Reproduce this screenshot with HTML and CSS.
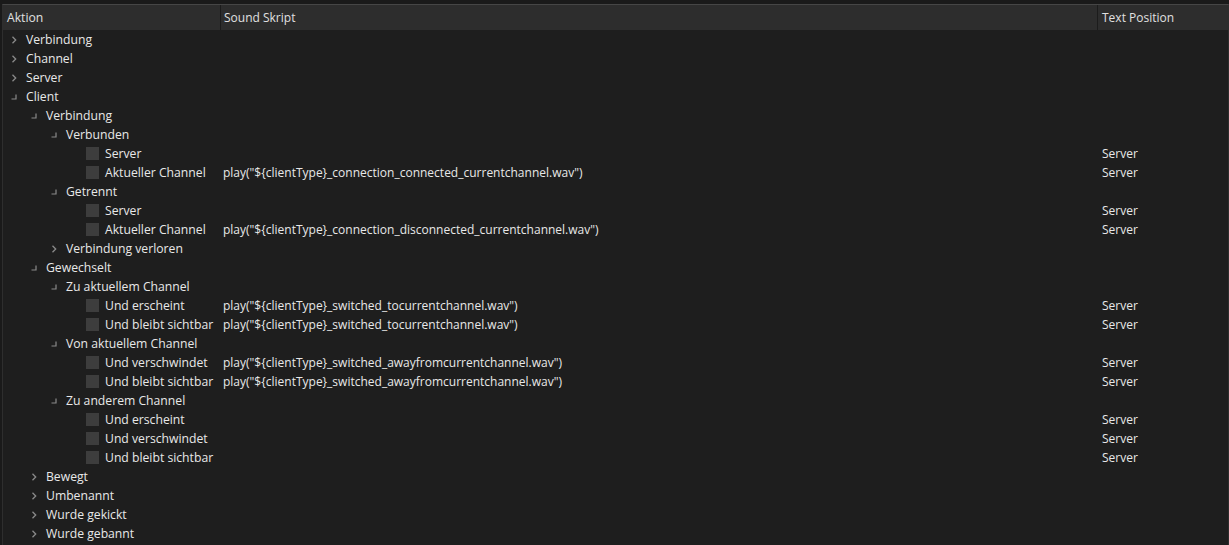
FILE: index.html
```html
<!DOCTYPE html>
<html>
<head>
<meta charset="utf-8">
<link rel="stylesheet" href="styles.css">
</head>
<body>
<div class="frame">
  <div class="tree">
    <div class="row head">
      <div class="cell c1">Aktion</div>
      <div class="cell c2">Sound Skript</div>
      <div class="cell c3">Text Position</div>
    </div>
    <div class="body" id="body"></div>
  </div>
</div>
<svg width="0" height="0" style="position:absolute">
  <defs>
    <symbol id="col" viewBox="0 0 8 8"><path d="M2.5 0.8 L5.7 4 L2.5 7.2" fill="none" stroke="#8a8a8a" stroke-width="1.3"/></symbol>
    <symbol id="exp" viewBox="0 0 8 8"><path d="M6 1.5 V6 H1.5" fill="none" stroke="#8a8a8a" stroke-width="1.2"/></symbol>
  </defs>
</svg>
<script src="app.js"></script>
</body>
</html>
```
FILE: styles.css
```css
html, body {
  margin: 0;
  padding: 0;
  background: #1e1e1e;
}
body {
  font-family: "Open Sans", "Noto Sans", sans-serif;
  font-size: 12px;
  color: #e8e8e8;
  width: 1229px;
  height: 545px;
  overflow: hidden;
}
.frame {
  padding-top: 4px;
  padding-left: 2px;
  background: #1a1a1a;
  height: 545px;
  box-sizing: border-box;
}
.tree {
  border-top: 1px solid #464646;
  border-left: 1px solid #2e2e2e;
  border-right: 1px solid #2e2e2e;
  background: #1e1e1e;
  height: 100%;
}
.row {
  display: grid;
  grid-template-columns: 217px 877px 1fr;
  height: 19px;
  align-items: center;
}
.row.head {
  height: 25px;
  background: #2d2d2d;
  color: #e0e0e0;
}
.head .cell {
  height: 25px;
  display: flex;
  align-items: center;
  padding-left: 4px;
  box-sizing: border-box;
}
.head .c2, .head .c3 {
  border-left: 1px solid #1c1c1c;
}
.head .c2 { padding-left: 3px; }
.head .c3 { padding-left: 4px; }
.cell {
  white-space: nowrap;
  overflow: hidden;
  line-height: 19px;
}
.c1 {
  display: flex;
  align-items: center;
  font-size: 12.2px;
}
.c2 { padding-left: 3px; }
.c3 { padding-left: 5px; }
.indent { flex: none; }
.arrow {
  width: 8px;
  height: 8px;
  margin-left: 7px;
  margin-right: 8px;
  flex: none;
}
.box {
  width: 13px;
  height: 13px;
  background: #3d3d3d;
  margin-left: 23px;
  margin-right: 6px;
  flex: none;
}
```
FILE: app.js
```js
const S = (n) => 'play("${clientType}_' + n + '.wav")';
const rows = [
  [0,'c','Verbindung'],
  [0,'c','Channel'],
  [0,'c','Server'],
  [0,'e','Client'],
  [1,'e','Verbindung'],
  [2,'e','Verbunden'],
  [3,'b','Server','', 'Server'],
  [3,'b','Aktueller Channel', S('connection_connected_currentchannel'), 'Server'],
  [2,'e','Getrennt'],
  [3,'b','Server','', 'Server'],
  [3,'b','Aktueller Channel', S('connection_disconnected_currentchannel'), 'Server'],
  [2,'c','Verbindung verloren'],
  [1,'e','Gewechselt'],
  [2,'e','Zu aktuellem Channel'],
  [3,'b','Und erscheint', S('switched_tocurrentchannel'), 'Server'],
  [3,'b','Und bleibt sichtbar', S('switched_tocurrentchannel'), 'Server'],
  [2,'e','Von aktuellem Channel'],
  [3,'b','Und verschwindet', S('switched_awayfromcurrentchannel'), 'Server'],
  [3,'b','Und bleibt sichtbar', S('switched_awayfromcurrentchannel'), 'Server'],
  [2,'e','Zu anderem Channel'],
  [3,'b','Und erscheint','', 'Server'],
  [3,'b','Und verschwindet','', 'Server'],
  [3,'b','Und bleibt sichtbar','', 'Server'],
  [1,'c','Bewegt'],
  [1,'c','Umbenannt'],
  [1,'c','Wurde gekickt'],
  [1,'c','Wurde gebannt'],
];
const body = document.getElementById('body');
for (const [lvl, kind, name, script = '', pos = ''] of rows) {
  const r = document.createElement('div');
  r.className = 'row';
  const c1 = document.createElement('div');
  c1.className = 'cell c1';
  const ind = document.createElement('span');
  ind.className = 'indent';
  ind.style.width = (lvl * 20) + 'px';
  c1.appendChild(ind);
  if (kind === 'b') {
    const b = document.createElement('span');
    b.className = 'box';
    c1.appendChild(b);
  } else {
    const svg = document.createElementNS('http://www.w3.org/2000/svg', 'svg');
    svg.setAttribute('class', 'arrow');
    svg.setAttribute('viewBox', '0 0 8 8');
    const u = document.createElementNS('http://www.w3.org/2000/svg', 'use');
    u.setAttribute('href', kind === 'c' ? '#col' : '#exp');
    svg.appendChild(u);
    c1.appendChild(svg);
  }
  const t = document.createElement('span');
  t.textContent = name;
  c1.appendChild(t);
  const c2 = document.createElement('div');
  c2.className = 'cell c2';
  c2.textContent = script;
  const c3 = document.createElement('div');
  c3.className = 'cell c3';
  c3.textContent = pos;
  r.append(c1, c2, c3);
  body.appendChild(r);
}
```
